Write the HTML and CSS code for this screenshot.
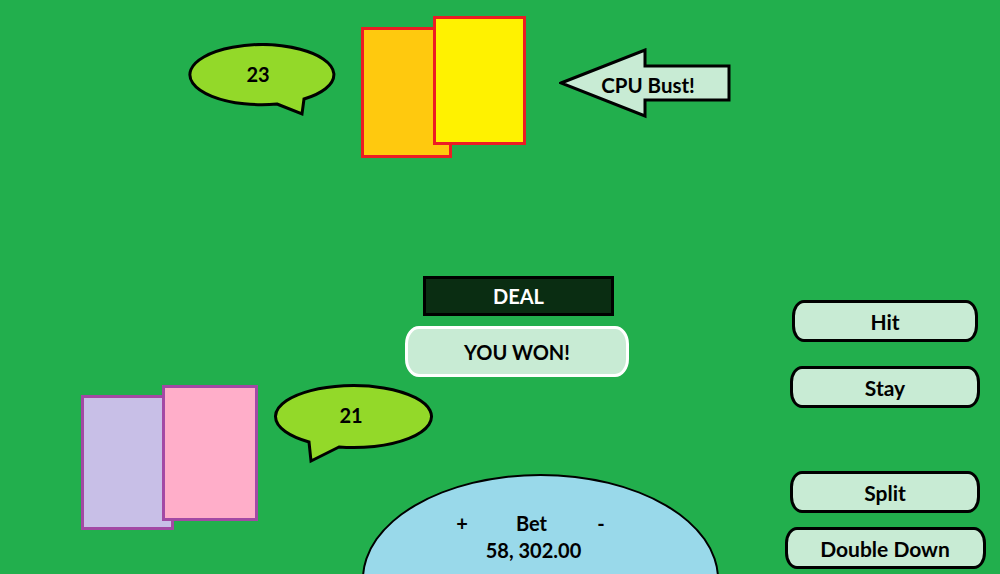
FILE: index.html
```html
<!DOCTYPE html>
<html>
<head>
<meta charset="utf-8">
<link rel="stylesheet" href="styles.css">
</head>
<body>
<main class="table">
  <svg class="bubble bubble-cpu" width="160" height="80" viewBox="0 0 160 80">
    <path d="M89 61 L114 71 L116 56 A72 30 0 1 0 89 61 Z" fill="#93d929" stroke="#000" stroke-width="3" stroke-linejoin="miter"/>
  </svg>
  <div class="bubble-label label-cpu">23</div>

  <div class="card card-orange"></div>
  <div class="card card-yellow"></div>

  <svg class="arrow" width="175" height="72" viewBox="0 0 175 72">
    <polygon points="2,35 86,2 86,18 170,18 170,52 86,52 86,68" fill="#c8ebd4" stroke="#000" stroke-width="3" stroke-linejoin="miter"/>
  </svg>
  <div class="arrow-label">CPU Bust!</div>

  <div class="deal">DEAL</div>
  <div class="result">YOU WON!</div>

  <div class="card card-lavender"></div>
  <div class="card card-pink"></div>

  <svg class="bubble bubble-player" width="165" height="82" viewBox="0 0 165 82">
    <path d="M65 63 L37 77 L35 58 A78 31 0 1 1 65 63 Z" fill="#93d929" stroke="#000" stroke-width="3" stroke-linejoin="miter"/>
  </svg>
  <div class="bubble-label label-player">21</div>

  <div class="bet">
    <div class="bet-row"><span class="bet-op">+</span><span>Bet</span><span class="bet-op">-</span></div>
    <div class="bet-amount">58, 302.00</div>
  </div>

  <nav class="actions">
    <button class="btn btn-hit">Hit</button>
    <button class="btn btn-stay">Stay</button>
    <button class="btn btn-split">Split</button>
    <button class="btn btn-double">Double Down</button>
  </nav>
</main>
</body>
</html>
```

FILE: styles.css
```css
html, body {
  margin: 0;
  padding: 0;
  overflow: hidden;
}
body {
  background: #22af4d;
  font-family: Lato, "Open Sans", sans-serif;
  font-weight: 700;
  color: #000;
}
.table {
  position: relative;
  width: 1000px;
  height: 574px;
  overflow: hidden;
  background: #22af4d;
}
.bubble {
  position: absolute;
}
.bubble-cpu { left: 188px; top: 43px; }
.bubble-player { left: 274px; top: 384px; }
.bubble-label {
  position: absolute;
  font-size: 20px;
  line-height: 24px;
  width: 60px;
  text-align: center;
}
.label-cpu { left: 228px; top: 62px; }
.label-player { left: 321px; top: 403px; }

.card {
  position: absolute;
  box-sizing: border-box;
  border: 3px solid #ed1c24;
}
.card-orange { left: 361px; top: 27px; width: 91px; height: 131px; background: #ffc90e; }
.card-yellow { left: 433px; top: 16px; width: 93px; height: 129px; background: #fff200; }
.card-lavender { left: 81px; top: 395px; width: 93px; height: 135px; background: #c8bfe7; border-color: #a349a4; }
.card-pink { left: 162px; top: 385px; width: 96px; height: 136px; background: #ffaec9; border-color: #a349a4; }

.arrow { position: absolute; left: 559px; top: 48px; }
.arrow-label {
  position: absolute;
  left: 590px;
  top: 72px;
  width: 116px;
  text-align: center;
  font-size: 20.5px;
  line-height: 26px;
}

.deal {
  position: absolute;
  left: 423px;
  top: 276px;
  width: 191px;
  height: 40px;
  box-sizing: border-box;
  border: 3px solid #000;
  background: #0a2d12;
  color: #fff;
  font-size: 20px;
  display: flex;
  align-items: center;
  justify-content: center;
}
.result {
  position: absolute;
  left: 405px;
  top: 326px;
  width: 224px;
  height: 51px;
  box-sizing: border-box;
  border: 3px solid #fff;
  border-radius: 14px / 18px;
  background: #c8ebd4;
  font-size: 20px;
  display: flex;
  align-items: center;
  justify-content: center;
}

.bet {
  position: absolute;
  left: 362px;
  top: 474px;
  width: 357px;
  height: 210px;
  box-sizing: border-box;
  border: 2px solid #000;
  border-radius: 50%;
  background: #99d9ea;
  display: flex;
  flex-direction: column;
  align-items: center;
  padding-top: 34px;
  font-size: 20px;
  line-height: 27px;
}
.bet-row {
  display: flex;
  gap: 48px;
  margin-left: -18px;
}
.bet-op { width: 12px; text-align: center; }
.bet-amount { margin-left: -14px; }

.actions {
  position: absolute;
  left: 783px;
  top: 300px;
  width: 204px;
  display: flex;
  flex-direction: column;
  align-items: center;
}
.btn {
  font: inherit;
  font-size: 21px;
  color: #000;
  background: #c8ebd4;
  border: 3px solid #000;
  border-radius: 12px / 16px;
  box-sizing: border-box;
  padding: 0;
  height: 42px;
  display: flex;
  align-items: center;
  justify-content: center;
}
.btn-hit { width: 186px; }
.btn-stay { width: 190px; margin-top: 24px; }
.btn-split { width: 190px; margin-top: 63px; }
.btn-double { width: 201px; margin-top: 14px; }
```
